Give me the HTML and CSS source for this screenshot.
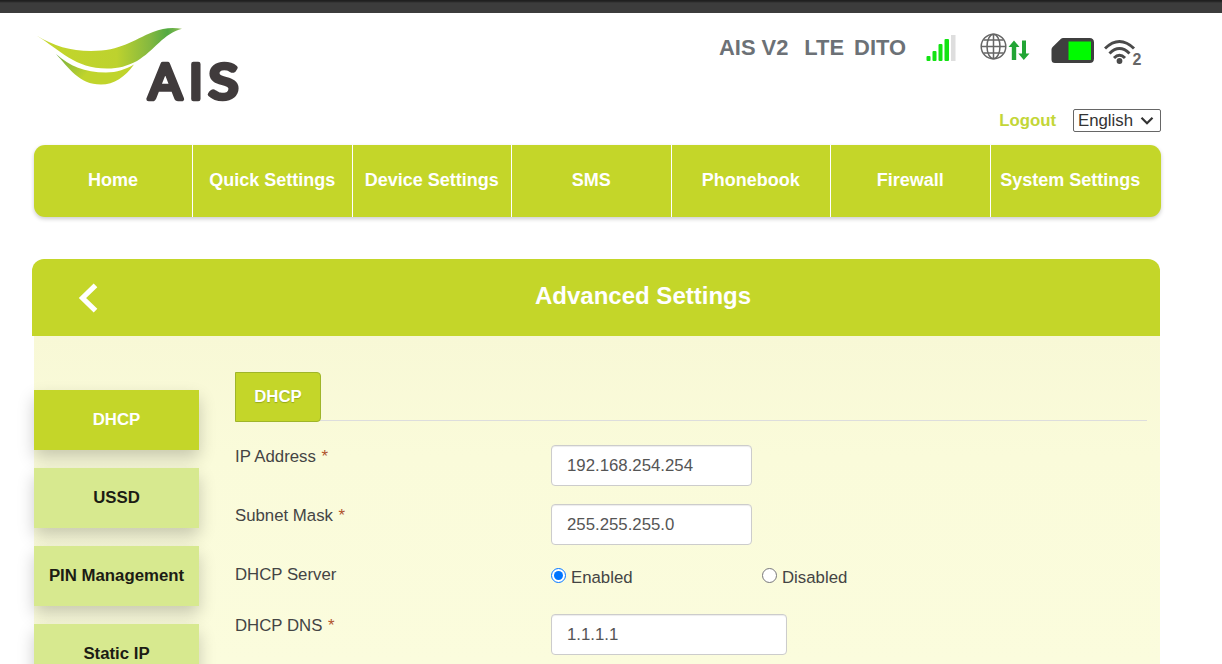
FILE: index.html
```html
<!DOCTYPE html>
<html lang="en">
  <head>
    <meta charset="UTF-8" />
    <meta name="viewport" content="width=device-width, initial-scale=1.0" />
    <title>Advanced Settings</title>
    <link rel="stylesheet" href="styles.css">
  </head>
  <body>
    <div class="topbar"></div>

    <div class="container">
      <header class="header">
        <svg class="logo" width="230" height="110" viewBox="34 22 230 110">
          <defs>
            <linearGradient id="leaf" x1="37" y1="0" x2="182" y2="0" gradientUnits="userSpaceOnUse">
              <stop offset="0" stop-color="#c4d62b" />
              <stop offset="0.55" stop-color="#bdd22e" />
              <stop offset="0.78" stop-color="#84b840" />
              <stop offset="0.9" stop-color="#52aa42" />
              <stop offset="1" stop-color="#92bd55" />
            </linearGradient>
            <linearGradient id="leafSmall" x1="56" y1="54" x2="90" y2="84" gradientUnits="userSpaceOnUse">
              <stop offset="0" stop-color="#72ac43" />
              <stop offset="0.8" stop-color="#c0d42c" />
            </linearGradient>
          </defs>
          <path fill="url(#leaf)" d="M36.500 35.500C54 46 70 51 91 51C121 51 133 40 153 32C163 28 172 27 182 28.800C164 33 154 51 137 61C127 66 119 68.500 107 68.500C75 68.500 60 50 36.500 35.500Z" />
          <path fill="url(#leafSmall)" d="M56 54C70 66 84 72.500 106 72.500C117 72.500 126 69 134 64.500C125 77 114 84.500 101 84.500C79 84.500 69 68 56 54Z" />
          <g class="logo-text">
            <text x="148.500" y="98.500" textLength="33.500" lengthAdjust="spacingAndGlyphs">A</text>
            <text x="189" y="98.500">I</text>
            <text x="208.500" y="98.500" textLength="30" lengthAdjust="spacingAndGlyphs">S</text>
          </g>
        </svg>

        <div class="header-right">
          <div class="status">
            <span class="ssid">AIS V2</span>
            <span class="network">LTE</span>
            <span class="operator">DITO</span>
            <svg class="signal" width="30" height="28" viewBox="0 0 30 28">
              <g fill="#12e312">
                <rect x="0.500" y="22" width="4" height="5" rx="1" />
                <rect x="6.500" y="17" width="4" height="10" rx="1" />
                <rect x="12.500" y="10" width="4" height="17" rx="1" />
                <rect x="18.500" y="5" width="4.500" height="22" rx="1" />
              </g>
              <rect x="25" y="1" width="4.500" height="26" fill="#dedede" />
            </svg>
            <svg class="globe" width="50" height="30" viewBox="0 0 50 30">
              <g fill="none" stroke="#666" stroke-width="1.500">
                <circle cx="13.500" cy="13.500" r="12.300" />
                <ellipse cx="13.500" cy="13.500" rx="6.500" ry="12.300" />
                <path d="M13.500 1v25M1 13.500h25M3.500 7h20M3.500 20h20" />
              </g>
              <path fill="#22a535" d="M34 7.500L39.500 14H36.200V27H31.800V14H28.500ZM42 7.500H46V20.500H49.500L43.800 27L38.300 20.500H42Z" />
            </svg>
            <svg class="sim" width="44" height="27" viewBox="0 0 44 27">
              <path fill="#3f3f3f" d="M12 1H38.500Q43 1 43 5.500V21.500Q43 26 38.500 26H4Q0.500 26 0.500 22.500V12.500Q0.500 11 1.600 10L10 1.800Q11 1 12 1Z" />
              <rect x="17.500" y="4.500" width="22.500" height="18.500" fill="#00fb00" />
            </svg>
            <svg class="wifi" width="38" height="32" viewBox="0 0 38 32">
              <g fill="none" stroke="#4a4a4a" stroke-width="3">
                <path d="M1 9.500Q15.500 -4.500 30 9.500" />
                <path d="M5.500 14.500Q15.500 4.500 25.500 14.500" />
                <path d="M10 19Q15.500 13.500 21 19" />
              </g>
              <circle cx="15.500" cy="22" r="2.900" fill="#4a4a4a" />
              <text class="wifi-count" x="28.500" y="25.500">2</text>
            </svg>
          </div>

          <div class="tools">
            <a class="logout">Logout</a>
            <div class="language">
              <span>English</span>
              <svg width="14" height="10" viewBox="0 0 14 10">
                <path fill="none" stroke="#333" stroke-width="2.200" d="M1.500 1.800L7 7.300L12.500 1.800" />
              </svg>
            </div>
          </div>
        </div>
      </header>

      <nav class="nav">
        <a>Home</a>
        <a>Quick Settings</a>
        <a>Device Settings</a>
        <a>SMS</a>
        <a>Phonebook</a>
        <a>Firewall</a>
        <a>System Settings</a>
      </nav>

      <div class="title-bar">
        <svg class="back" width="20" height="30" viewBox="0 0 20 30">
          <path fill="none" stroke="#fff" stroke-width="5.200" d="M17.500 2.300L4.500 15L17.500 27.700" />
        </svg>
        <h1>Advanced Settings</h1>
      </div>

      <div class="panel">
        <div class="menu">
          <a class="menu-item active">DHCP</a>
          <a class="menu-item">USSD</a>
          <a class="menu-item">PIN Management</a>
          <a class="menu-item">Static IP</a>
        </div>

        <div class="content">
          <div class="tabs">
            <a class="tab">DHCP</a>
          </div>

          <div class="row">
            <label for="ip">IP Address <span class="required">*</span></label>
            <input class="field" type="text" id="ip" value="192.168.254.254" />
          </div>
          <div class="row">
            <label for="mask">Subnet Mask <span class="required">*</span></label>
            <input class="field" type="text" id="mask" value="255.255.255.0" />
          </div>
          <div class="row row-radio">
            <label>DHCP Server</label>
            <div class="radio">
              <input type="radio" name="dhcp" id="on" checked />
              <label for="on">Enabled</label>
            </div>
            <div class="radio">
              <input type="radio" name="dhcp" id="off" />
              <label for="off">Disabled</label>
            </div>
          </div>
          <div class="row">
            <label for="dns">DHCP DNS <span class="required">*</span></label>
            <input class="field field-wide" type="text" id="dns" value="1.1.1.1" />
          </div>
        </div>
      </div>
    </div>
  </body>
</html>
```
FILE: styles.css
```css
* {
  box-sizing: border-box;
}

body {
  font-family: "Liberation Sans", Arial, sans-serif;
  font-size: 16.8px;
  line-height: 20px;
  margin: 0;
  height: 664px;
  overflow: hidden;
  background: #fff;
  color: #444;
}

.topbar {
  height: 13px;
  background: linear-gradient(#202020 1px, #3c3c3c 3px);
}

.container {
  width: 1127px;
  margin-left: 34px;
}

.header {
  height: 132px;
  display: flex;
  justify-content: space-between;
}

.logo {
  margin-top: 9px;
}

.logo-text {
  font-size: 49px;
  font-family: Lato, sans-serif;
  fill: #403b3c;
  stroke: #403b3c;
  stroke-width: 4.6;
  stroke-linejoin: round;
}

.header-right {
  width: 442px;
}

.status {
  height: 69px;
  padding-top: 20px;
  display: flex;
  align-items: flex-start;
  font-size: 21.9px;
  line-height: 30px;
  font-weight: bold;
  color: #6c7176;
}

.network {
  margin-left: 16px;
}

.operator {
  margin-left: 10px;
}

.signal {
  margin: 1px 0 0 20px;
}

.globe {
  margin-left: 24px;
}

.sim {
  margin: 4px 0 0 21px;
}

.wifi {
  margin: 6px 0 0 9px;
}

.wifi-count {
  font-size: 16px;
  fill: #666;
}

.tools {
  margin-top: 27px;
  display: flex;
  justify-content: flex-end;
  align-items: center;
}

.logout {
  font-weight: bold;
  color: #c3d637;
  margin-right: 17px;
}

.language {
  width: 88px;
  height: 23px;
  padding: 0 6px 0 4px;
  border: 1px solid #666;
  border-radius: 2px;
  display: flex;
  align-items: center;
  justify-content: space-between;
  color: #333;
}

.nav {
  height: 72px;
  display: flex;
  background: #c4d629;
  border-radius: 11px;
  box-shadow: 0 2px 4px rgba(0, 0, 0, 0.2);
}

.nav a {
  width: 159.5px;
  line-height: 70px;
  text-align: center;
  font-size: 18px;
  font-weight: bold;
  color: #fff;
  border-right: 1px solid #fff;
}

.nav a:first-child {
  width: 159px;
}

.nav a:last-child {
  border-right: none;
}

.title-bar {
  height: 77px;
  width: 1128px;
  margin: 42px 0 0 -2px;
  padding: 0 0 0 46px;
  display: flex;
  align-items: center;
  background: #c4d629;
  border-radius: 12px 12px 0 0;
}

h1 {
  margin: 0 0 3px 437px;
  font-size: 24px;
  line-height: 30px;
  color: #fff;
}

.panel {
  width: 1126px;
  height: 328px;
  display: flex;
  background: linear-gradient(#f8f8d6, #fafbda 120px, #fbfcdd);
}

.menu {
  width: 165px;
  padding-top: 54px;
}

.menu-item {
  display: block;
  height: 60px;
  margin-bottom: 18px;
  line-height: 59px;
  text-align: center;
  font-weight: bold;
  color: #1c1c14;
  background: #d7e98f;
  box-shadow: 0 8px 16px rgba(0, 0, 0, 0.2);
}

.menu-item.active {
  color: #fff;
  background: #c4d629;
}

.content {
  width: 912px;
  margin-left: 36px;
  padding-top: 36px;
}

.tabs {
  height: 49px;
  border-bottom: 1px solid #ddd;
}

.tab {
  display: block;
  width: 86px;
  height: 50px;
  line-height: 47px;
  text-align: center;
  font-weight: bold;
  color: #fff;
  text-shadow: 0 1px 1px rgba(80, 100, 0, 0.4);
  background: #c4d629;
  border: 1px solid #9fb52a;
  border-radius: 0 4px 4px 0;
}

.row {
  height: 41px;
  margin-top: 18px;
  display: flex;
}

.tabs + .row {
  margin-top: 24px;
}

.row > label {
  width: 316px;
  padding-top: 2px;
}

.required {
  margin-left: 1px;
  color: #b0532e;
}

.field {
  width: 201px;
  height: 41px;
  padding: 0 15px;
  font: inherit;
  color: #555;
  background: #fff;
  border: 1px solid #ccc;
  border-radius: 4px;
  box-shadow: inset 0 1px 1px rgba(0, 0, 0, 0.075);
}

.field-wide {
  width: 236px;
}

.row-radio {
  height: 33px;
}

.radio {
  width: 211px;
  display: flex;
}

.radio input {
  width: 15px;
  height: 15px;
  margin: 5px 5px 0 0;
}

.radio label {
  padding-top: 5px;
}
```
